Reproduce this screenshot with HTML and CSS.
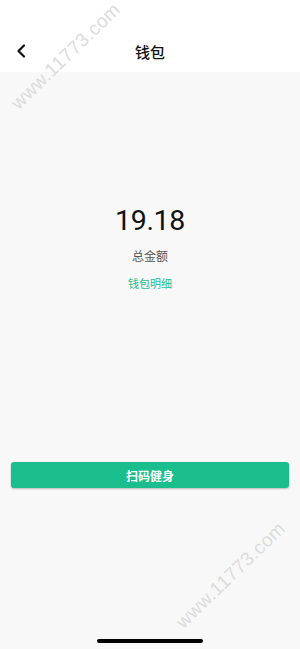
FILE: index.html
```html
<!DOCTYPE html>
<html>
<head>
<meta charset="utf-8">
<link rel="stylesheet" href="styles.css">
</head>
<body>
<div class="page">
  <header class="header">
    <div class="nav">
      <svg class="back" width="10" height="14" viewBox="0 0 10 14"><path d="M8 1.5 L2.5 7 L8 12.5" fill="none" stroke="#111" stroke-width="2.2" stroke-linecap="round" stroke-linejoin="round"/></svg>
      <div class="title">钱包</div>
    </div>
  </header>
  <main class="main">
    <div class="amount">19.18</div>
    <div class="label">总金额</div>
    <div class="link">钱包明细</div>
    <button class="btn">扫码健身</button>
  </main>
  <div class="home"></div>
  <div class="wm wm1">www.11773.com</div>
  <div class="wm wm2">www.11773.com</div>
</div>
</body>
</html>
```
FILE: styles.css
```css
* { box-sizing: border-box; }
html, body { margin: 0; padding: 0; }
body {
  width: 300px; height: 649px; overflow: hidden;
  font-family: "Noto Sans CJK SC", "Noto Sans", sans-serif;
  background: #f8f8f8;
}
.page { position: relative; width: 300px; height: 649px; display: flex; flex-direction: column; }
.header { background: #fff; height: 72px; padding-top: 36px; }
.nav { position: relative; height: 30px; display: flex; align-items: center; justify-content: center; }
.back { position: absolute; left: 16px; top: 8px; }
.title { font-size: 15px; font-weight: 500; color: #111; }
.main { flex: 1; display: flex; flex-direction: column; align-items: center; }
.amount { margin-top: 129px; font-family: Roboto, "Noto Sans", sans-serif; font-size: 28.5px; font-weight: 400; color: #111; line-height: 40px; letter-spacing: -0.3px; }
.label { margin-top: 6px; font-size: 12px; color: #555; line-height: 18px; }
.link { margin-top: 9px; font-size: 11px; color: #1fbf8f; line-height: 18px; }
.btn {
  margin-top: 170px; width: 278px; height: 26px; border: none; border-radius: 3px;
  background: #19be8c; color: #fff; font-family: "Noto Sans CJK SC", sans-serif;
  font-size: 12px; font-weight: 700; box-shadow: 0 1px 2px rgba(0,0,0,0.25);
}
.home { position: absolute; left: 97px; top: 639px; width: 106px; height: 4px; border-radius: 2px; background: #000; }
.wm { position: absolute; font-family: "Liberation Sans", sans-serif; font-size: 19px; color: #dcdcdc; transform: rotate(-44deg); transform-origin: left bottom; white-space: nowrap; letter-spacing: 0.4px; }
.wm1 { left: 22px; top: 92px; }
.wm2 { left: 187px; top: 611px; }
```
